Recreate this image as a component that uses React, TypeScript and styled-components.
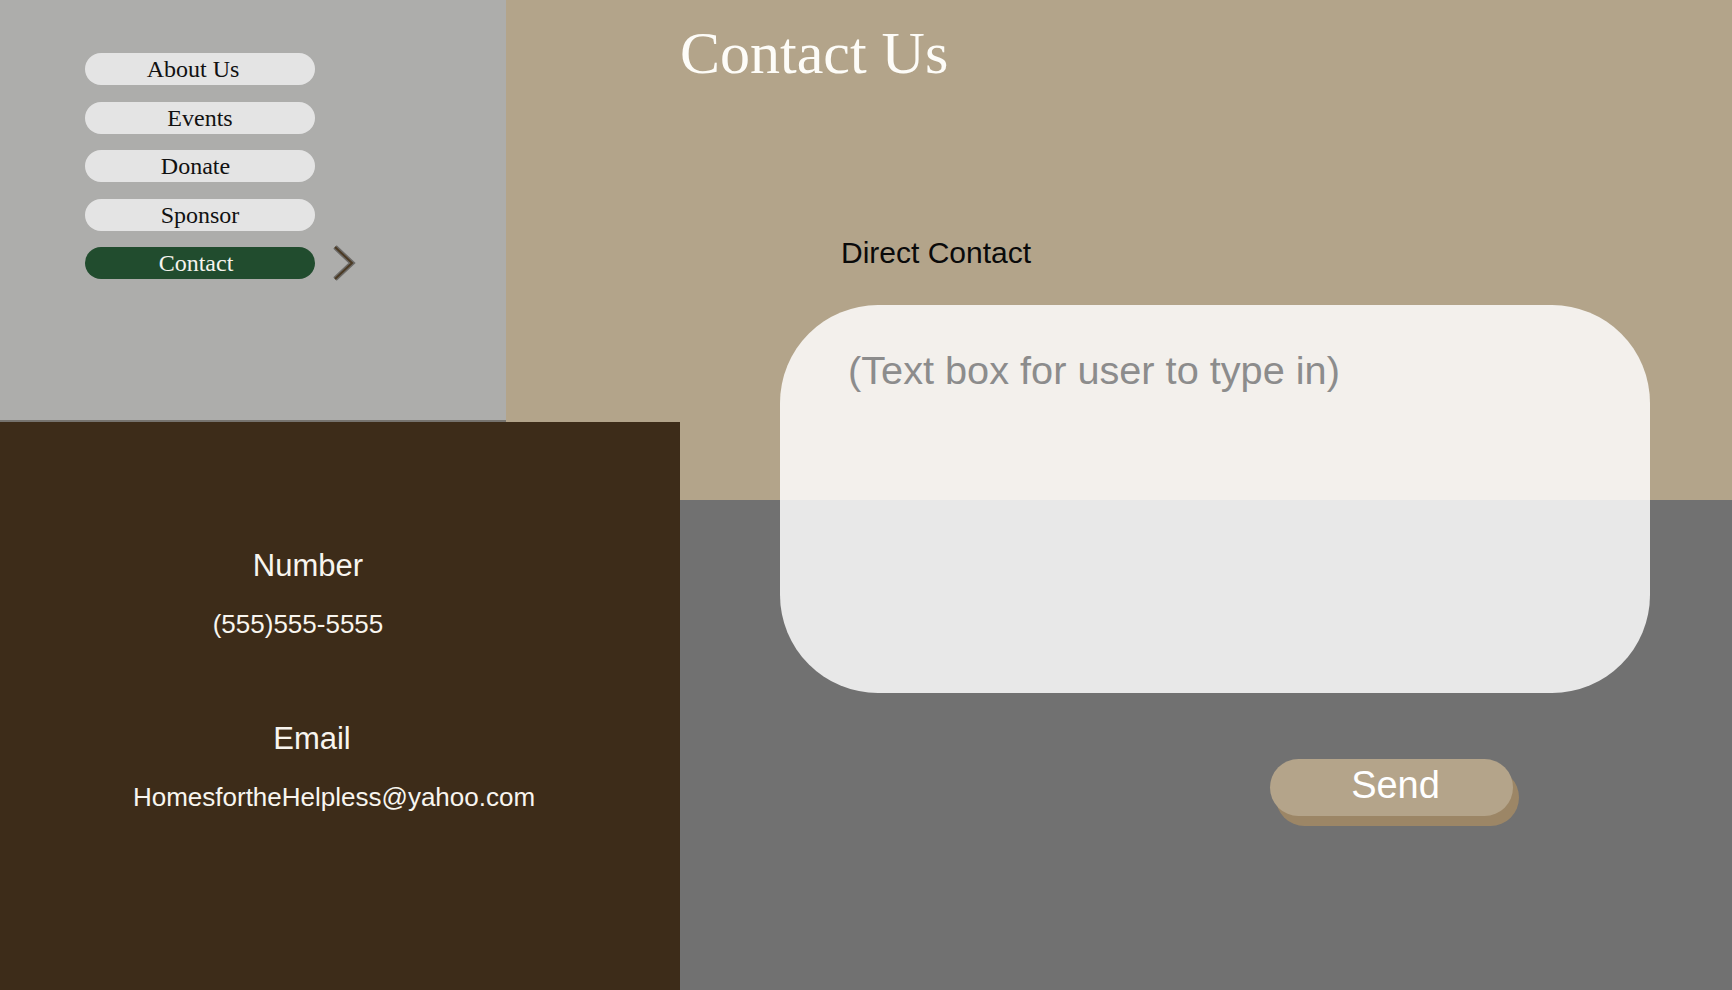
import React from "react";
import styled, { createGlobalStyle } from "styled-components";

const GlobalStyle = createGlobalStyle`
  html, body { margin: 0; padding: 0; }
  body { width: 1732px; height: 990px; overflow: hidden; }
  * { box-sizing: border-box; }
`;

const Page = styled.div`
  width: 1732px;
  height: 990px;
  display: grid;
  grid-template-columns: 506px 174px 1fr;
  grid-template-rows: 420px 2px 78px 1fr;
  background: linear-gradient(to bottom, #b3a48a 0, #b3a48a 500px, #717171 500px, #717171 100%);
`;

const NavPanel = styled.nav`
  grid-column: 1;
  grid-row: 1;
  background: #adadab;
  display: flex;
  flex-direction: column;
  gap: 16.5px;
  padding: 53px 0 0 85px;
`;

const NavDivider = styled.div`
  grid-column: 1;
  grid-row: 2;
  background: #76736e;
`;

const NavRow = styled.div`
  height: 32px;
  display: flex;
  align-items: center;
  gap: 17px;
`;

const NavButton = styled.a<{ $active?: boolean; $offset?: number }>`
  width: 230px;
  height: 32px;
  border-radius: 16px;
  display: flex;
  justify-content: center;
  padding-right: ${(p) => p.$offset ?? 0}px;
  font-family: "Liberation Serif", "Times New Roman", serif;
  font-size: 24px;
  line-height: 32px;
  text-decoration: none;
  background: ${(p) => (p.$active ? "#214c2e" : "#e4e4e4")};
  color: ${(p) => (p.$active ? "#f6f4ee" : "#111")};
  cursor: pointer;
`;

const ContactPanel = styled.section`
  grid-column: 1 / 3;
  grid-row: 3 / 5;
  background: #3d2c19;
  color: #f8f5ef;
  font-family: "Liberation Sans", Arial, Helvetica, sans-serif;
  display: flex;
  flex-direction: column;
  gap: 82px;
  padding-top: 126px;
`;

const InfoGroup = styled.div`
  display: flex;
  flex-direction: column;
  gap: 25px;
`;

const InfoLabel = styled.div<{ $offset: number }>`
  font-size: 31px;
  line-height: 36px;
  text-align: center;
  padding-right: ${(p) => p.$offset}px;
`;

const InfoValue = styled.div<{ $offset: number }>`
  font-size: 26px;
  line-height: 30px;
  text-align: center;
  padding-right: ${(p) => p.$offset}px;
`;

const Main = styled.main`
  grid-column: 3;
  grid-row: 1 / 5;
  display: flex;
  flex-direction: column;
  align-items: flex-start;
`;

const Title = styled.h1`
  margin: 23px 0 0 0;
  font-family: "Liberation Serif", "Times New Roman", serif;
  font-weight: 400;
  font-size: 60px;
  line-height: 60px;
  color: #fdfcf8;
`;

const SectionLabel = styled.h2`
  margin: 155px 0 0 161px;
  font-family: "Liberation Sans", Arial, Helvetica, sans-serif;
  font-weight: 400;
  font-size: 30px;
  line-height: 30px;
  color: #0a0a0a;
`;

const MessageBox = styled.textarea`
  margin: 37px 0 0 100px;
  width: 870px;
  height: 388px;
  border: none;
  outline: none;
  resize: none;
  border-radius: 98px;
  background: rgba(255, 255, 255, 0.84);
  padding: 46px 60px 46px 68px;
  font-family: "Liberation Sans", Arial, Helvetica, sans-serif;
  font-size: 39.7px;
  line-height: 39px;
  color: #333;
  &::placeholder {
    color: #8c8c8c;
    opacity: 1;
  }
`;

const SendButton = styled.button`
  margin: 66px 0 0 590px;
  width: 243px;
  height: 57px;
  border: none;
  border-radius: 28.5px;
  background: #b4a48a;
  box-shadow: 6px 10px 0 #9c8666;
  color: #ffffff;
  font-family: "Liberation Sans", Arial, Helvetica, sans-serif;
  font-size: 38px;
  line-height: 44px;
  padding: 0 0 6px 8px;
  cursor: pointer;
`;

const Chevron = () => (
  <svg width="26" height="40" viewBox="0 0 26 40" aria-hidden="true">
    <polyline
      points="3,4 20,20 3,36"
      fill="none"
      stroke="#6c6a67"
      strokeWidth="5"
      strokeLinejoin="miter"
    />
    <polyline
      points="3,4 20,20 3,36"
      fill="none"
      stroke="#4b3a24"
      strokeWidth="2"
      strokeLinejoin="miter"
    />
  </svg>
);

const navItems: { label: string; offset: number; active?: boolean }[] = [
  { label: "About Us", offset: 14 },
  { label: "Events", offset: 0 },
  { label: "Donate", offset: 9 },
  { label: "Sponsor", offset: 0 },
  { label: "Contact", offset: 8, active: true },
];

export default function App() {
  return (
    <>
      <GlobalStyle />
      <Page>
        <NavPanel>
          {navItems.map((item) => (
            <NavRow key={item.label}>
              <NavButton $active={item.active} $offset={item.offset}>
                {item.label}
              </NavButton>
              {item.active && <Chevron />}
            </NavRow>
          ))}
        </NavPanel>
        <NavDivider />
        <ContactPanel>
          <InfoGroup>
            <InfoLabel $offset={64}>Number</InfoLabel>
            <InfoValue $offset={84}>(555)555-5555</InfoValue>
          </InfoGroup>
          <InfoGroup>
            <InfoLabel $offset={56}>Email</InfoLabel>
            <InfoValue $offset={12}>HomesfortheHelpless@yahoo.com</InfoValue>
          </InfoGroup>
        </ContactPanel>
        <Main>
          <Title>Contact Us</Title>
          <SectionLabel>Direct Contact</SectionLabel>
          <MessageBox placeholder="(Text box for user to type in)" />
          <SendButton>Send</SendButton>
        </Main>
      </Page>
    </>
  );
}
